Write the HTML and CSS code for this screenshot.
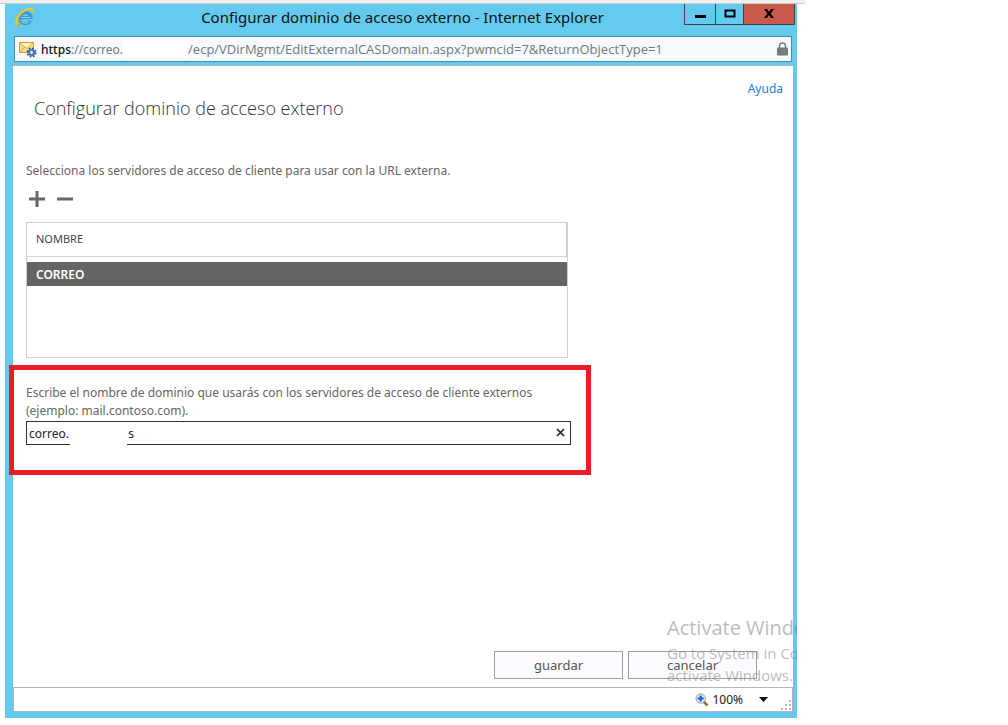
FILE: index.html
```html
<!DOCTYPE html>
<html lang="es">
<head>
<meta charset="utf-8">
<title>Configurar dominio de acceso externo - Internet Explorer</title>
<link rel="stylesheet" href="styles.css">
</head>
<body>
<div class="backdrop-strip"></div>
<div class="window">
  <header class="titlebar">
    <svg class="ie-logo" viewBox="0 0 20 20" aria-hidden="true">
      <path d="M15.500 13.500 A5.600 5.600 0 1 1 16 10.500 H6.500" fill="none" stroke="#3a96cc" stroke-width="3"/>
      <path d="M15 13.600 A5.200 5.200 0 0 1 5.500 12.500 M6 10.500 H15.500" fill="none" stroke="#8fd3f5" stroke-width="1"/>
      <path d="M2.500 17.500 C-1 15 4 6 10.500 3 C14.500 1 18.500 .8 17.500 5.500" fill="none" stroke="#f2c522" stroke-width="2.200"/>
      <path d="M2.500 17.500 C4 18.500 6 17.500 7.500 16.500" fill="none" stroke="#d9a915" stroke-width="1.500"/>
    </svg>
    <h1 class="window-title">Configurar dominio de acceso externo - Internet Explorer</h1>
    <div class="window-controls">
      <button class="control minimize" aria-label="Minimizar"><svg width="12" height="10" viewBox="0 0 12 10"><path d="M1 6h11v3H1z"/></svg></button>
      <button class="control maximize" aria-label="Maximizar"><svg width="12" height="10" viewBox="0 0 12 10"><path d="M1.500 1.500h9v6h-9z" fill="none" stroke="#000" stroke-width="2"/></svg></button>
      <button class="control close" aria-label="Cerrar"><svg width="12" height="10" viewBox="0 0 12 10"><path d="M1 0h3l2 3 2-3h3L7.600 4.500 11 9H8L6 6 4 9H1l3.400-4.500z"/></svg></button>
    </div>
  </header>

  <div class="address">
    <svg class="site-icon" viewBox="0 0 18 17" aria-hidden="true">
      <path d="M.5 1.500h14v10H.5z" fill="#fbe08a" stroke="#cf9c35"/>
      <path d="M1 2l6.500 5.500L14 2z" fill="#fff3bd"/>
      <path d="M1 2l6.500 5.500L14 2M1 11l4.500-5" fill="none" stroke="#d6a545"/>
      <circle cx="12.500" cy="11.500" r="3.800" fill="#5578b8"/>
      <circle cx="12.500" cy="11.500" r="4.300" fill="none" stroke="#355a9c" stroke-width="1.600" stroke-dasharray="1.800 1.577"/>
      <circle cx="12.500" cy="11.500" r="1.400" fill="#dce8fa"/>
    </svg>
    <span class="url"><b>https</b>://correo.<span class="url-blank"></span><span class="url-path">/ecp/VDirMgmt/EditExternalCASDomain.aspx?pwmcid=7&amp;ReturnObjectType=1</span></span>
    <svg class="lock" width="11" height="14" viewBox="0 0 11 14" aria-hidden="true">
      <path d="M2.500 6.500V4a3 3 0 0 1 6 0v2.500" fill="none" stroke="#757b7b" stroke-width="1.500"/>
      <rect y="5.500" width="11" height="8" rx="1" fill="#757b7b"/>
    </svg>
  </div>

  <div class="page">
    <div class="page-top"><a class="help" href="#ayuda">Ayuda</a></div>
    <h2 class="page-title">Configurar dominio de acceso externo</h2>
    <p class="caption">Selecciona los servidores de acceso de cliente para usar con la URL externa.</p>
    <div class="toolbar">
      <button class="tool" aria-label="Agregar"><svg width="16" height="16" viewBox="0 0 16 16"><path d="M6.500 0h3v6.500H16v3H9.500V16h-3V9.500H0v-3h6.500z"/></svg></button>
      <button class="tool" aria-label="Quitar"><svg width="16" height="16" viewBox="0 0 16 16"><path d="M0 6.500h16v3H0z"/></svg></button>
    </div>
    <div class="list">
      <table class="servers">
        <thead><tr><th scope="col">NOMBRE</th></tr></thead>
        <tbody>
          <tr class="spacer" aria-hidden="true"><td></td></tr>
          <tr class="selected"><td>CORREO</td></tr>
        </tbody>
      </table>
    </div>
    <section class="highlight">
      <label class="domain-label" for="domain">Escribe el nombre de dominio que usarás con los servidores de acceso de cliente externos (ejemplo: mail.contoso.com).</label>
      <div class="field">
        <input class="domain" id="domain" type="text" value="correo.&nbsp;&nbsp;&nbsp;&nbsp;&nbsp;&nbsp;&nbsp;&nbsp;&nbsp;&nbsp;&nbsp;&nbsp;&nbsp;&nbsp;&nbsp;&nbsp;&nbsp;&nbsp;&nbsp;s">
        <span class="field-blank"></span>
        <button class="clear" aria-label="Borrar"><svg width="9" height="9" viewBox="0 0 9 9"><path d="M1 1l7 7M8 1L1 8" fill="none" stroke="#222" stroke-width="1.700"/></svg></button>
      </div>
    </section>
    <div class="actions">
      <button class="action">guardar</button>
      <button class="action">cancelar</button>
    </div>
  </div>

  <footer class="status">
    <button class="zoom">
      <svg width="14" height="14" viewBox="0 0 14 14" aria-hidden="true">
        <path d="M8.500 8.500l4 4" stroke="#a96b35" stroke-width="2.600"/>
        <circle cx="5.700" cy="5.500" r="4.700" fill="#d7ebff" stroke="#8f9fb3"/>
        <path d="M5.700 2.500v6M2.700 5.500h6" stroke="#1763d1" stroke-width="2.200"/>
      </svg>
      <span>100%</span>
      <svg class="caret" width="9" height="5" viewBox="0 0 9 5" aria-hidden="true"><path d="M0 0h9L4.500 5z"/></svg>
    </button>
    <svg class="grip" width="10" height="10" viewBox="0 0 10 10" aria-hidden="true"><path d="M8 0h2v2H8zM4 4h2v2H4zM8 4h2v2H8zM0 8h2v2H0zM4 8h2v2H4zM8 8h2v2H8z" fill="#b5b5b5"/></svg>
  </footer>

  <div class="watermark">
    <div class="watermark-title">Activate Windows</div>
    <div>Go to System in Control</div>
    <div>activate Windows.</div>
  </div>
</div>
</body>
</html>
```

FILE: styles.css
```css
* { box-sizing: border-box; }

body {
  margin: 0;
  min-height: 100vh;
  display: flex;
  flex-direction: column;
  background: #fff;
  font-family: "Noto Sans", "Open Sans", sans-serif;
  font-size: 12px;
  color: #666;
}

button {
  font: inherit;
  color: inherit;
  background: none;
  border: 0;
  padding: 0;
}

svg { display: block; flex: none; }

.backdrop-strip {
  height: 4px;
  margin-right: 203px;
  background: #f0f0f0;
  border-bottom: 1px solid #ccc;
}

.window {
  position: relative;
  flex: 1;
  display: flex;
  flex-direction: column;
  margin: 0 211px 7px 5px;
  padding: 0 4px 6px 8px;
  background: #64cbee;
  overflow: hidden;
}

.titlebar {
  display: flex;
  align-items: flex-start;
  height: 32px;
  padding-left: 2px;
}

.ie-logo { width: 20px; height: 20px; margin-top: 3px; }

.window-title {
  flex: 1;
  margin: 0;
  padding-left: 86px;
  font-size: 15px;
  font-weight: 400;
  line-height: 27px;
  text-align: center;
  white-space: nowrap;
  color: #111;
}

.window-controls {
  display: flex;
  height: 21px;
  margin-right: -2px;
  border: 1px solid #35444b;
  border-top: 0;
}

.control {
  width: 29px;
  display: flex;
  align-items: center;
  justify-content: center;
}

.control + .control { border-left: 1px solid #35444b; }
.minimize { width: 30px; }
.maximize { width: 28px; }
.control.close { width: 51px; background: #c75a4d; }

.address {
  display: flex;
  align-items: center;
  gap: 4px;
  height: 26px;
  margin: 0 1px 3px;
  padding: 0 3px 0 4px;
  background: #f5faff;
  border: 1px solid #4a8ba0;
}

.site-icon { width: 18px; height: 17px; }

.url {
  flex: 1;
  display: flex;
  align-items: center;
  white-space: nowrap;
  color: #777;
}

.url b { font-weight: 500; color: #111; }
.url-blank { width: 65px; height: 18px; background: #fff; }
.url-path { font-family: "Open Sans", "Noto Sans", sans-serif; font-size: 13px; }

.page {
  flex: 1;
  display: flex;
  flex-direction: column;
  padding: 0 13px 8px;
  background: #fff;
  border-top: 1px solid #9db9cd;
}

.page-top {
  display: flex;
  justify-content: flex-end;
  padding: 13px 0 0;
  margin-right: -3px;
  line-height: 20px;
}

.help { color: #1a7fd4; text-decoration: none; }

.page-title {
  margin: 0 0 44px;
  padding-left: 8px;
  font-family: "Open Sans", "Noto Sans", sans-serif;
  font-size: 18px;
  font-weight: 300;
  line-height: 18px;
  color: #333;
}

.caption { margin: 0; line-height: 20px; }

.toolbar {
  display: flex;
  gap: 12px;
  padding: 10px 3px 15px;
}

.tool { fill: #666; }

.list {
  width: 542px;
  height: 136px;
  border: 1px solid #ccd0d8;
}

.servers {
  width: 100%;
  border-collapse: collapse;
}

.servers th {
  height: 33px;
  padding: 0 9px 1px;
  border-right: 1px solid #ccd0d8;
  border-bottom: 1px solid #ccd0d8;
  font-size: 11px;
  font-weight: 400;
  text-align: left;
  color: #444;
}

.servers td {
  height: 24px;
  padding: 0 9px;
  font-weight: 600;
}

.servers .spacer td { height: 6px; padding: 0; }
.selected { background: #636562; color: #fff; }

.highlight {
  width: 582px;
  margin: 7px 0 0 -17px;
  padding: 14px 15px 25px 12px;
  border: 5px solid #ed1c24;
}

.domain-label { display: block; line-height: 18px; }

.field {
  position: relative;
  margin-top: 1px;
}

.domain {
  display: block;
  width: 100%;
  height: 24px;
  padding: 0 24px 0 2px;
  border: 1px solid #333;
  border-radius: 0;
  font: inherit;
  color: #222;
  background: #fff;
}

.field-blank {
  position: absolute;
  left: 44px;
  bottom: 0;
  width: 57px;
  height: 2px;
  background: #fff;
}

.clear {
  position: absolute;
  right: 6px;
  top: 7px;
}

.actions {
  display: flex;
  justify-content: flex-end;
  gap: 5px;
  margin-top: auto;
  padding-right: 23px;
}

.action {
  width: 129px;
  height: 28px;
  border: 1px solid #9aa0a6;
  background: #fdfbff;
  font-size: 13px;
  color: #555;
}

.status {
  display: flex;
  align-items: center;
  justify-content: flex-end;
  height: 25px;
  border: 1px solid #b3b3b3;
  background: #fff;
}

.zoom {
  display: flex;
  align-items: center;
  gap: 3px;
  color: #222;
}

.caret { margin-left: 13px; }
.grip { margin: 10px 1px 0 13px; }

.watermark {
  position: absolute;
  left: 662px;
  bottom: 32px;
  font-family: "Open Sans", "Noto Sans", sans-serif;
  font-size: 15px;
  line-height: 22px;
  white-space: nowrap;
  color: rgba(120, 120, 120, 0.5);
  pointer-events: none;
}

.watermark-title { font-size: 20px; line-height: 28px; }
```
